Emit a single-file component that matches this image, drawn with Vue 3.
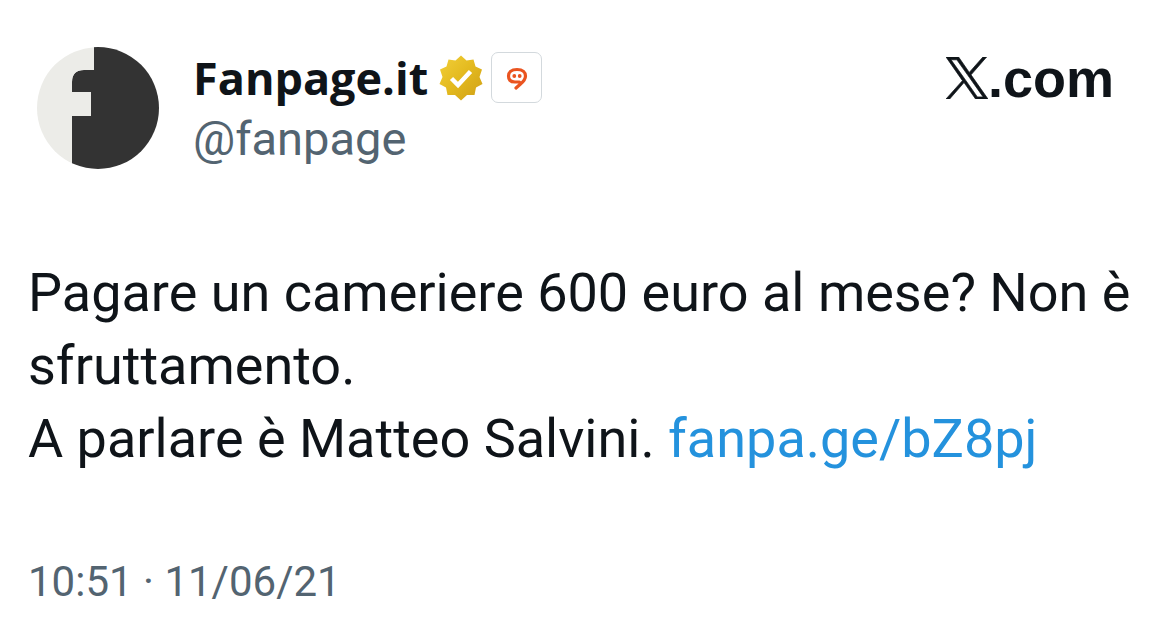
<script setup>
const post = {
  name: 'Fanpage.it',
  handle: '@fanpage',
  first: 'Pagare un cameriere 600 euro al mese? Non è sfruttamento.',
  second: 'A parlare è Matteo Salvini.',
  link: 'fanpa.ge/bZ8pj',
  date: '10:51 · 11/06/21',
}
</script>

<template>
  <article class="post">
    <header class="head">
      <svg class="avatar" viewBox="0 0 122 122" role="img" aria-label="Fanpage.it">
        <defs>
          <clipPath id="light-part"><path d="M0 0H57V23H47Q35 23 35 35V45H54V69H35V122H0Z" /></clipPath>
          <clipPath id="dark-part"><path d="M57 0H122V122H35V69H54V45H35V35Q35 23 47 23H57Z" /></clipPath>
        </defs>
        <circle cx="61" cy="61" r="61" fill="#333" clip-path="url(#dark-part)" />
        <circle cx="61" cy="61" r="61" fill="#ecece8" clip-path="url(#light-part)" />
      </svg>
      <div class="who">
        <div class="nameline">
          <span class="name">{{ post.name }}</span>
          <svg class="badge" viewBox="0 0 44 46" aria-hidden="true">
            <defs><linearGradient id="gold" x1="0" y1="0" x2="1" y2="1"><stop offset="0" stop-color="#f2d03a" /><stop offset="0.5" stop-color="#e3b91e" /><stop offset="1" stop-color="#cf9f16" /></linearGradient></defs>
            <path d="M22 .5 27.500 5.500 34.500 4.500 36.500 11.500 43 14.500 40.500 22 43.500 29 37 32.500 35.500 40 28 40 22 45.500 16 40 8.500 40 7 32.500 .5 29 3.500 22 1 14.500 7.500 11.500 9.500 4.500 16.500 5.500Z" fill="url(#gold)" />
            <path d="M12.500 23.500l6.500 6.500L31.500 16.500" fill="none" stroke="#fff" stroke-width="4.500" />
          </svg>
          <span class="affiliate">
            <svg viewBox="0 0 24 26" aria-hidden="true"><path d="M14.500 17H10C5 17 3.500 14.500 3.500 11S6 4.500 12 4.500s8.500 3 8.500 6.500-2 5.500-5 8L11 23" fill="none" stroke="#ea5420" stroke-width="3.200" stroke-linejoin="round" stroke-linecap="round" /><circle cx="9.300" cy="11" r="1.900" fill="#ea5420" /><circle cx="14.700" cy="11" r="1.900" fill="#ea5420" /></svg>
          </span>
        </div>
        <div class="handle">{{ post.handle }}</div>
      </div>
      <div class="brand"><svg viewBox="0 0 24 24" aria-hidden="true"><path d="M14.300 10.200 23.200 0h-2.100l-7.800 8.800L7.200 0H0l9.400 13.500L0 24h2.100l8.200-9.400L16.900 24H24ZM11.400 13.500l-1-1.400L2.900 1.600h3.300l6.100 8.600 1 1.400 7.900 11.200h-3.300Z" /></svg><span>.com</span></div>
    </header>
    <p class="body">{{ post.first }}<br />{{ post.second }} <a href="https://fanpa.ge/bZ8pj">{{ post.link }}</a></p>
    <time class="date" datetime="2021-06-11T10:51">{{ post.date }}</time>
  </article>
</template>

<style>
body { margin: 0; background: #fff; }
</style>
<style scoped>
.post { padding: 47px 24px 16px 28px; font-family: Roboto, "Noto Sans", sans-serif; color: #0f1419; }
.head { display: flex; align-items: flex-start; padding-left: 9px; }
.avatar { width: 122px; height: 122px; flex: none; }
.who { margin-left: 34px; }
.nameline { display: flex; align-items: center; height: 61px; }
.name { font-family: "Open Sans", sans-serif; font-weight: 700; font-size: 45px; line-height: 61px; }
.badge { width: 44px; height: 46px; margin-left: 11px; }
.affiliate { box-sizing: border-box; width: 51px; height: 51px; margin-left: 8px; border: 1px solid #d3d9dd; border-radius: 7px; display: flex; align-items: center; justify-content: center; }
.affiliate svg { width: 24px; height: 26px; }
.handle { font-size: 47px; line-height: 61px; color: #536471; }
.brand { margin-left: auto; margin-right: 32px; display: flex; align-items: center; font-family: "Liberation Sans", sans-serif; font-weight: 700; font-size: 54px; line-height: 62px; }
.brand svg { width: 42px; height: 42px; fill: #0f1419; stroke: #0f1419; stroke-width: 0.4; }
.body { margin: 87px 0 0; font-size: 54px; line-height: 73px; }
.body a { color: #2492dd; text-decoration: none; }
.date { display: block; margin-top: 77px; font-size: 42px; line-height: 60px; color: #536471; }
</style>
